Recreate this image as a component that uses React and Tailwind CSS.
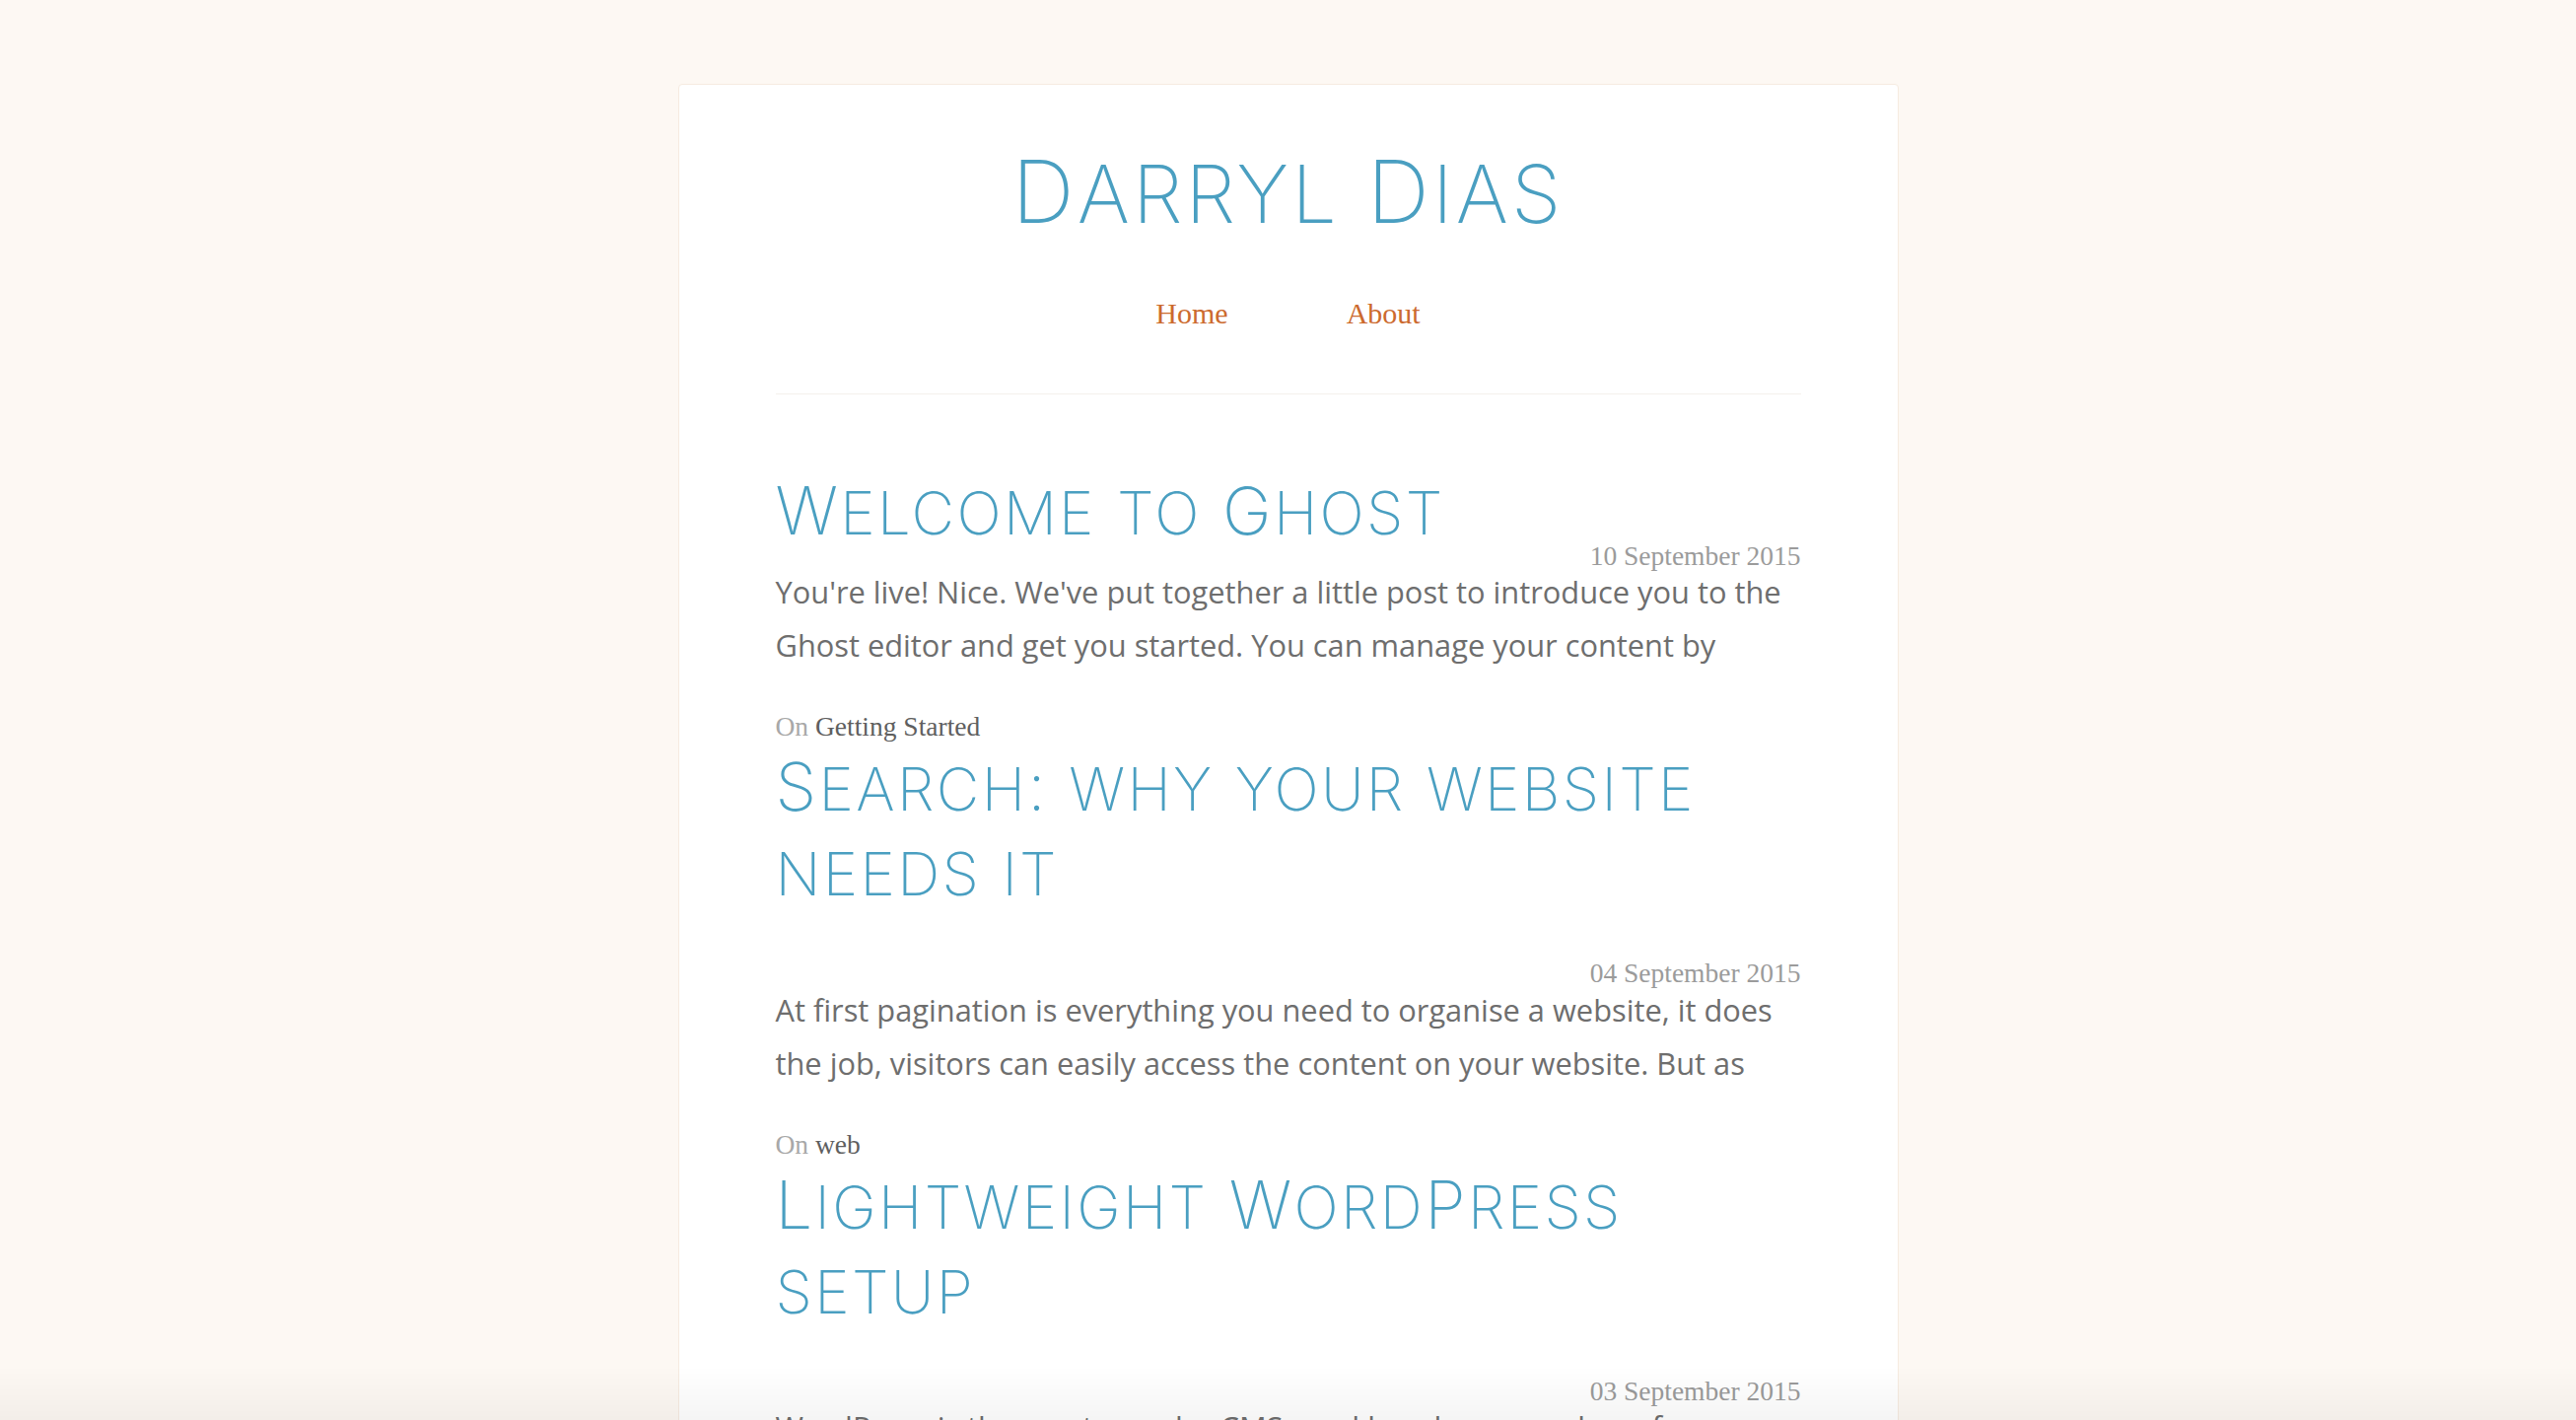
const posts = [
  {
    title: 'Welcome to Ghost',
    date: '10 September 2015',
    excerpt:
      "You're live! Nice. We've put together a little post to introduce you to the Ghost editor and get you started. You can manage your content by",
    tag: 'Getting Started',
  },
  {
    title: 'Search: why your website needs it',
    date: '04 September 2015',
    excerpt:
      'At first pagination is everything you need to organise a website, it does the job, visitors can easily access the content on your website. But as',
    tag: 'web',
  },
  {
    title: 'Lightweight WordPress setup',
    date: '03 September 2015',
    excerpt:
      'WordPress is the most popular CMS used by a large number of organisations and bloggers, but a default install ships with more than',
    tag: 'web',
  },
];

// capitals at full size, lowercase runs as slightly smaller capitals
function SmallCaps({ text, small }) {
  return text.split(/([a-z]+)/).map((part, i) =>
    i % 2 === 1 ? (
      <span key={i} className={small}>
        {part}
      </span>
    ) : (
      part
    )
  );
}

function Post({ post }) {
  return (
    <article>
      <header className="flex flex-wrap items-end justify-between">
        <h2 className="font-['Inter',sans-serif] text-[67px] font-extralight leading-[86px] tracking-[0.035em] text-[#4a9fc1]">
          <a href="#">
            <SmallCaps text={post.title} small="text-[60px] leading-none uppercase" />
          </a>
        </h2>
        <time className="ml-auto mt-[46px] mb-[-16px] font-['Liberation_Serif',serif] text-[27.5px] leading-none text-[#9b9b9b]">
          {post.date}
        </time>
      </header>
      <p className="mt-[12px] font-['Open_Sans',sans-serif] text-[30.8px] leading-[54px] text-[#6e6e6e]">
        {post.excerpt}
      </p>
      <div className="mt-[38px] font-['Liberation_Serif',serif] text-[27.5px] leading-[36px]">
        <span className="text-[#a8a8a8]">On</span>{' '}
        <a href="#" className="text-[#5f5f5f]">
          {post.tag}
        </a>
      </div>
    </article>
  );
}

export default function App() {
  return (
    <div className="min-h-screen bg-[#fdf8f3] pt-[85px]">
      <div className="mx-auto w-[1238px] rounded-[4px] border border-[#f6ebe0] bg-white px-[98px] pb-[100px] pt-[64px]">
        <header className="border-b border-[#f4f0ec] pb-[66px] text-center">
          <h1 className="font-['Inter',sans-serif] text-[88px] font-extralight leading-none tracking-[0.035em] text-[#4a9fc1]">
            <SmallCaps text="Darryl Dias" small="text-[81px] leading-none uppercase" />
          </h1>
          <nav className="mt-[65px] flex justify-center gap-[120px] font-['Liberation_Serif',serif] text-[30px] leading-none text-[#cc6a2e]">
            <a href="#">Home</a>
            <a href="#">About</a>
          </nav>
        </header>

        <main className="mt-[75px]">
          {posts.map((post) => (
            <Post key={post.title} post={post} />
          ))}
        </main>
      </div>

      {/* soft fade along the bottom edge of the window */}
      <div className="pointer-events-none fixed inset-x-0 bottom-0 h-[55px] bg-linear-to-b from-transparent to-black/[0.04]" />
    </div>
  );
}
